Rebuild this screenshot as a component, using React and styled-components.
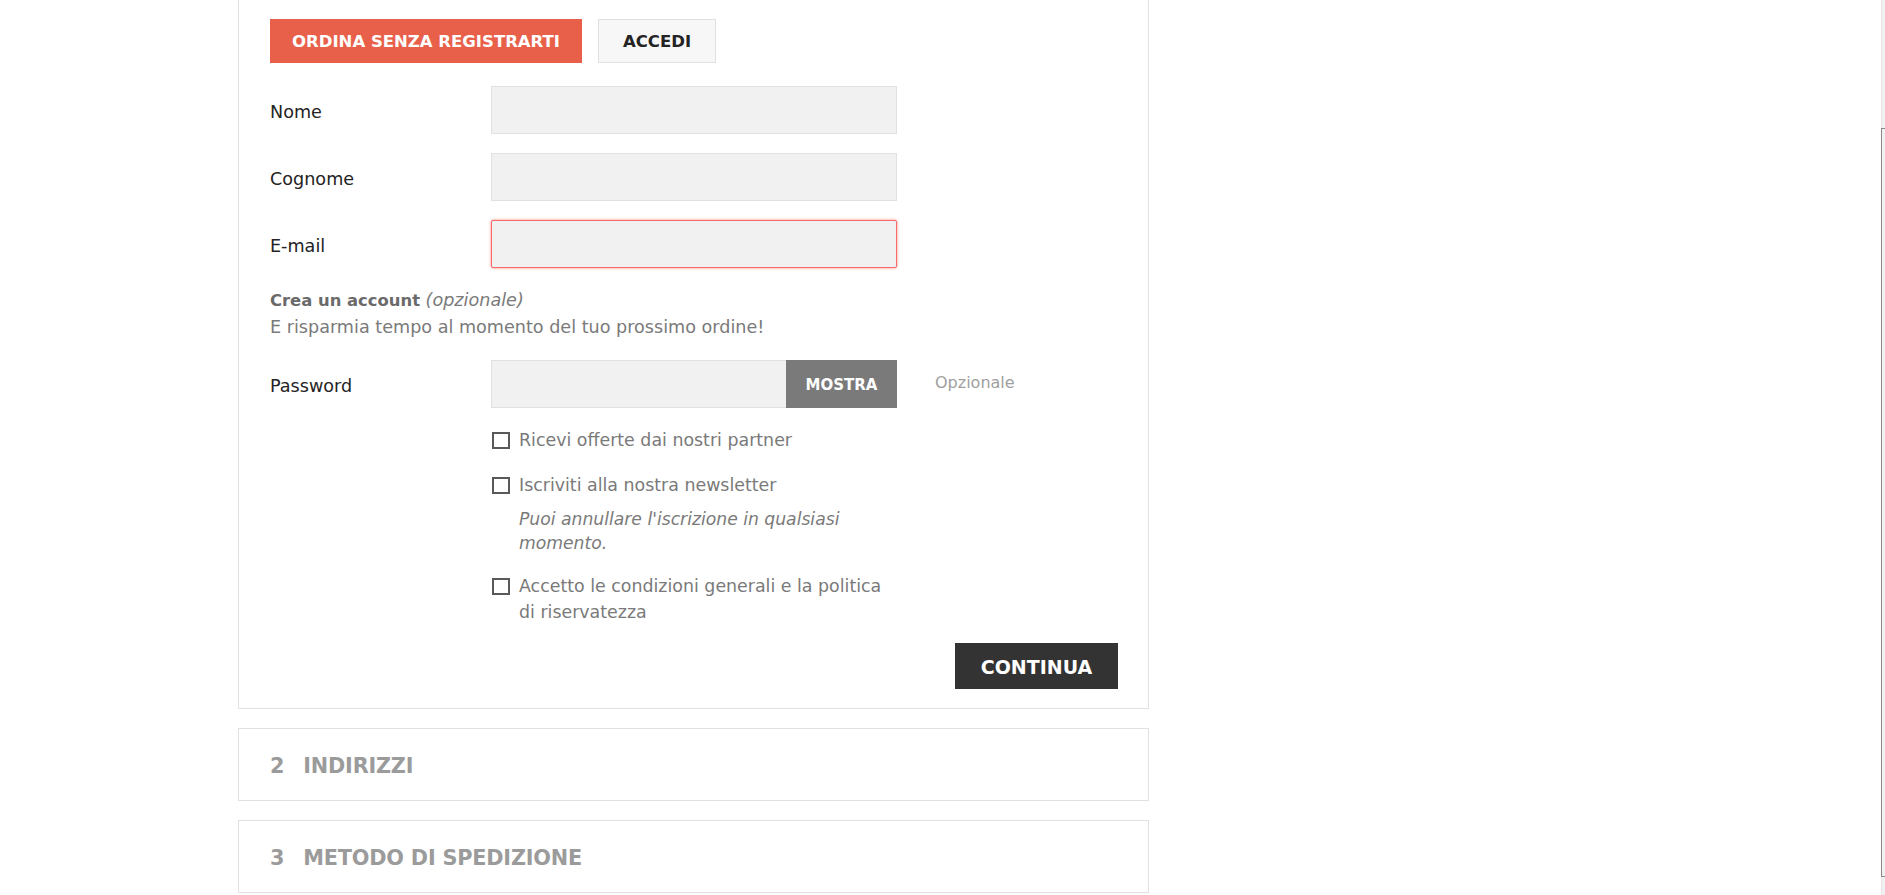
import styled, { createGlobalStyle } from "styled-components";

const GlobalStyle = createGlobalStyle`
  html, body {
    margin: 0;
    padding: 0;
    background: #ffffff;
  }
  body {
    font-family: "DejaVu Sans", "Liberation Sans", sans-serif;
    color: #232323;
  }
  * {
    box-sizing: border-box;
  }
`;

const Column = styled.div`
  width: 911px;
  margin-left: 238px;
  padding-bottom: 40px;
`;

const Step = styled.section`
  border: 1px solid #e1e1e1;
  border-top-width: ${(p) => (p.$cutTop ? "0" : "1px")};
  background: #fff;
  margin-top: ${(p) => (p.$cutTop ? "0" : "19px")};
`;

const StepBody = styled.div`
  padding: 19px 30px 19px 31px;
`;

const StepHead = styled.h2`
  margin: 0;
  height: 71px;
  padding: 3px 31px 0;
  display: flex;
  align-items: center;
  gap: 19px;
  font-size: 20.8px;
  font-weight: 700;
  color: #9b9b9b;
  text-transform: uppercase;
  letter-spacing: -0.2px;
`;

const Tabs = styled.div`
  display: flex;
  gap: 16px;
`;

const Tab = styled.button`
  height: 44px;
  padding: 0 ${(p) => (p.$primary ? "21px" : "24px")};
  font-family: inherit;
  font-size: 16.5px;
  font-weight: 700;
  text-transform: uppercase;
  border: 1px solid ${(p) => (p.$primary ? "#e9604a" : "#e1e1e1")};
  background: ${(p) => (p.$primary ? "#e9604a" : "#f7f7f7")};
  color: ${(p) => (p.$primary ? "#ffffff" : "#232323")};
  cursor: pointer;
`;

const Form = styled.div`
  margin-top: 23px;
`;

const FieldRow = styled.div`
  display: grid;
  grid-template-columns: 221px 406px auto;
  align-items: center;
  margin-top: ${(p) => p.$top || "19px"};
  &:first-child {
    margin-top: 0;
  }
`;

const Label = styled.label`
  font-size: 17.6px;
  color: #232323;
  padding-top: 4px;
`;

const Input = styled.input`
  height: 48px;
  width: 100%;
  background: #f1f1f1;
  border: 1px solid ${(p) => (p.$invalid ? "#f76b6b" : "#e1e1e1")};
  box-shadow: ${(p) => (p.$invalid ? "0 0 3px #ff8080" : "none")};
  border-radius: ${(p) => (p.$invalid ? "2px" : "0")};
  padding: 0 12px;
  font-family: inherit;
  font-size: 16px;
  outline: none;
`;

const AccountInfo = styled.div`
  margin-top: 19px;
  font-size: 17.6px;
  line-height: 26px;
  color: #7a7a7a;

  strong {
    font-weight: 700;
    color: #6a6a6a;
    font-size: 16.4px;
  }
  em {
    font-style: italic;
  }
`;

const PasswordGroup = styled.div`
  display: flex;
  height: 48px;
`;

const PasswordInput = styled(Input)`
  flex: 1;
  border-right: 0;
`;

const ShowButton = styled.button`
  width: 111px;
  border: 0;
  background: #7a7a7a;
  color: #fff;
  font-family: inherit;
  font-size: 15px;
  font-weight: 700;
  text-transform: uppercase;
  padding-top: 2px;
`;

const Hint = styled.span`
  padding-left: 38px;
  font-size: 16px;
  color: #a0a0a0;
  margin-top: -3px;
`;

const Checks = styled.div`
  margin-left: 221px;
  width: 406px;
`;

const CheckRow = styled.label`
  display: flex;
  align-items: flex-start;
  gap: 9px;
  margin-top: ${(p) => p.$top || "19px"};
  font-size: 17.4px;
  line-height: 26px;
  color: #7a7a7a;
`;

const Box = styled.span`
  flex: none;
  width: 18px;
  height: 17px;
  margin-left: 1px;
  margin-top: 5px;
  border: 2px solid #595959;
  background: #fff;
`;

const Note = styled.p`
  margin: 9px 0 0 28px;
  font-size: 17.2px;
  font-style: italic;
  line-height: 24px;
  color: #7a7a7a;
`;

const Footer = styled.div`
  display: flex;
  justify-content: flex-end;
  margin-top: 18px;
`;

const Continue = styled.button`
  width: 163px;
  height: 46px;
  border: 0;
  background: #333333;
  color: #fff;
  font-family: inherit;
  font-size: 19px;
  font-weight: 700;
  text-transform: uppercase;
  padding-top: 2px;
`;

const ScrollEdge = styled.div`
  position: fixed;
  top: 0;
  right: 0;
  bottom: 0;
  width: 4px;
  background: #f1f1f1;
  border-left: 1px solid #e6e6e6;

  &::after {
    content: "";
    position: absolute;
    left: -1px;
    top: 128px;
    bottom: 18px;
    width: 3px;
    border-left: 1px solid #8a8a8a;
    border-top: 1px solid #8a8a8a;
    border-bottom: 1px solid #8a8a8a;
  }
`;

const fields = [
  { id: "firstname", label: "Nome" },
  { id: "lastname", label: "Cognome" },
  { id: "email", label: "E-mail", invalid: true },
];

export default function App() {
  return (
    <>
      <GlobalStyle />
      <Column>
        <Step $cutTop>
          <StepBody>
            <Tabs>
              <Tab $primary>Ordina senza registrarti</Tab>
              <Tab>Accedi</Tab>
            </Tabs>

            <Form>
              {fields.map((f) => (
                <FieldRow key={f.id}>
                  <Label htmlFor={f.id}>{f.label}</Label>
                  <Input id={f.id} $invalid={f.invalid} />
                </FieldRow>
              ))}

              <AccountInfo>
                <strong>Crea un account</strong> <em>(opzionale)</em>
                <br />
                E risparmia tempo al momento del tuo prossimo ordine!
              </AccountInfo>

              <FieldRow $top="20px">
                <Label htmlFor="password">Password</Label>
                <PasswordGroup>
                  <PasswordInput id="password" type="password" />
                  <ShowButton>Mostra</ShowButton>
                </PasswordGroup>
                <Hint>Opzionale</Hint>
              </FieldRow>

              <Checks>
                <CheckRow>
                  <Box />
                  <span>Ricevi offerte dai nostri partner</span>
                </CheckRow>
                <CheckRow>
                  <Box />
                  <span>Iscriviti alla nostra newsletter</span>
                </CheckRow>
                <Note>Puoi annullare l'iscrizione in qualsiasi momento.</Note>
                <CheckRow $top="18px">
                  <Box />
                  <span>Accetto le condizioni generali e la politica di riservatezza</span>
                </CheckRow>
              </Checks>

              <Footer>
                <Continue>Continua</Continue>
              </Footer>
            </Form>
          </StepBody>
        </Step>

        <Step>
          <StepHead>
            <span>2</span>
            <span>Indirizzi</span>
          </StepHead>
        </Step>

        <Step>
          <StepHead>
            <span>3</span>
            <span>Metodo di spedizione</span>
          </StepHead>
        </Step>
      </Column>
      <ScrollEdge />
    </>
  );
}
